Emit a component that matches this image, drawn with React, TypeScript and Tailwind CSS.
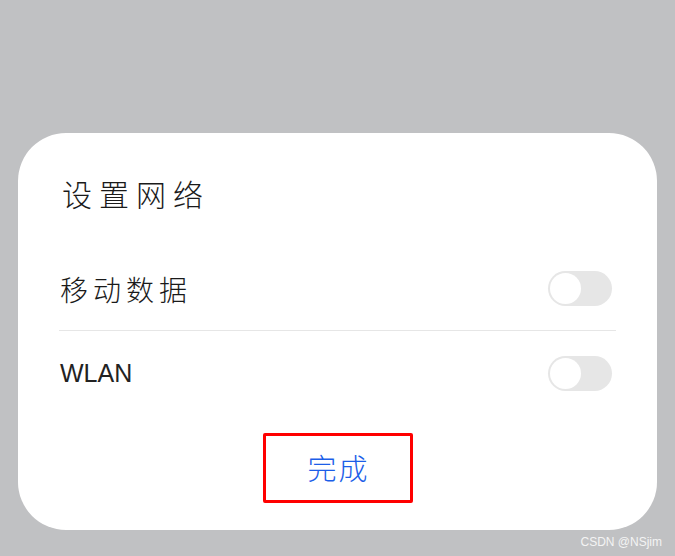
import React from "react";

function Toggle() {
  return (
    <div className="flex h-[35px] w-[64px] items-center rounded-full bg-[#e6e6e6] p-[2px]">
      <div className="h-[31px] w-[31px] rounded-full bg-white" />
    </div>
  );
}

export default function App() {
  const cjk = { fontFamily: '"Noto Sans CJK SC", "Noto Sans", sans-serif' };
  return (
    <div className="relative h-[556px] w-[675px] overflow-hidden bg-[#c0c1c3]">
      <div className="ml-[18px] mt-[133px] flex h-[397px] w-[639px] flex-col rounded-[48px] bg-white px-[41px]">
        <div
          className="pt-[42px] text-[30px] leading-[36px] tracking-[7px] text-[#1a1a1a] pl-[3px] font-light"
          style={cjk}
        >
          设置网络
        </div>
        <div className="mt-[36px] flex h-[84px] items-center justify-between border-b border-[#e6e6e6] pl-[1px] pr-[4px]">
          <span className="text-[28px] leading-[36px] tracking-[5px] text-[#1a1a1a] font-light" style={cjk}>
            移动数据
          </span>
          <Toggle />
        </div>
        <div className="flex h-[84px] items-center justify-between pl-[1px] pr-[4px]">
          <span
            className="text-[25px] leading-[36px] text-[#222222]"
            style={{ fontFamily: '"Liberation Sans", Arial, sans-serif' }}
          >
            WLAN
          </span>
          <Toggle />
        </div>
        <div className="mt-[18px] flex justify-center">
          <button
            className="flex h-[70px] w-[150px] items-center justify-center rounded-[2px] border-[3px] border-[#ff0000] bg-white pl-[2px] text-[29px] tracking-[2px] text-[#1c5ee8] font-light"
            style={cjk}
          >
            完成
          </button>
        </div>
      </div>
      <div
        className="absolute bottom-[7px] right-[13px] text-[12px] leading-[14px] text-[#f4f4f4]"
        style={{ fontFamily: '"Liberation Sans", Arial, sans-serif' }}
      >
        CSDN @NSjim
      </div>
    </div>
  );
}
